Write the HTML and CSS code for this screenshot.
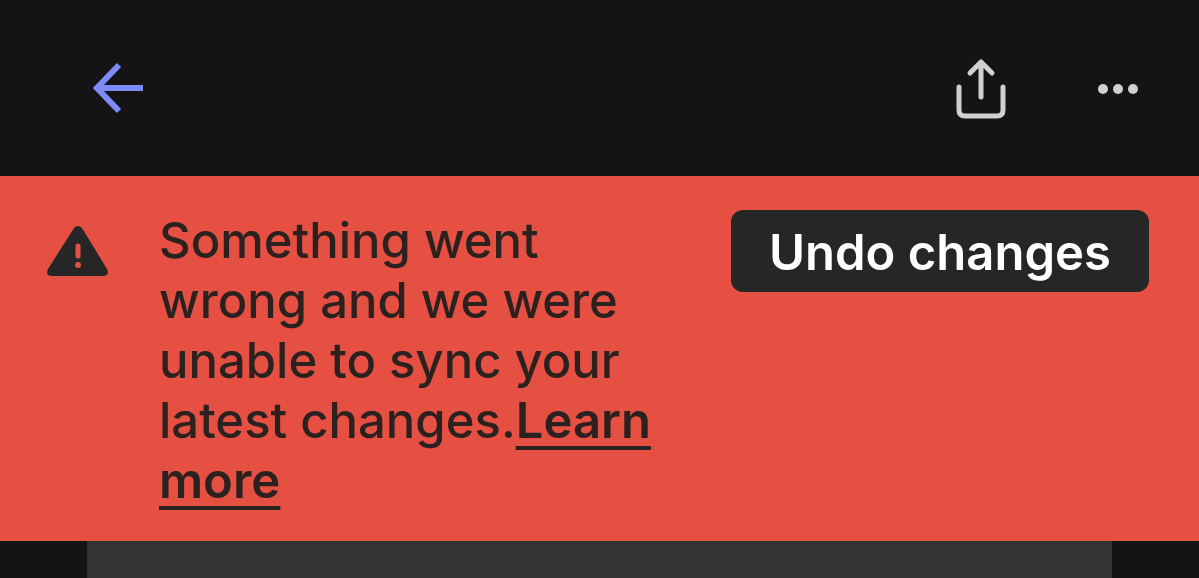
FILE: index.html
```html
<!DOCTYPE html>
<html lang="en">
<head>
<meta charset="utf-8">
<meta name="viewport" content="width=device-width, initial-scale=1">
<title>Sync error</title>
<link rel="stylesheet" href="styles.css">
</head>
<body>
<header class="topbar">
  <button class="icon-button" type="button" aria-label="Back">
    <svg class="back-icon" width="52" height="52" viewBox="0 0 52 52"><path d="M51 26H6M27 3L5 26L27 49"/></svg>
  </button>
  <div class="actions">
    <button class="icon-button" type="button" aria-label="Share">
      <svg class="share-icon" width="50" height="62" viewBox="0 0 50 62"><path d="M26 40V5M15 16L26 5L37 16M4 30V53Q4 59 10 59H42Q48 59 48 53V30"/></svg>
    </button>
    <button class="icon-button" type="button" aria-label="More">
      <svg class="more-icon" width="42" height="12" viewBox="0 0 42 12"><circle cx="6" cy="7" r="5"/><circle cx="21" cy="7" r="5"/><circle cx="36" cy="7" r="5"/></svg>
    </button>
  </div>
</header>
<section class="banner" role="alert">
  <svg class="warning-icon" width="62" height="52" viewBox="0 0 62 52"><path class="triangle" d="M27 2Q31-2 35 2L60 43Q63 50 56 50H5Q-2 50 1 43Z"/><path class="mark" d="M31 20V30"/><circle class="dot" cx="31" cy="39" r="3"/></svg>
  <p class="message">Something went wrong and we were unable to sync your latest changes.<a class="learn" href="#">Learn more</a></p>
  <button class="undo" type="button">Undo changes</button>
</section>
<main class="content"><div class="cover"></div></main>
</body>
</html>
```
FILE: styles.css
```css
* { box-sizing: border-box; }
body {
  display: flex;
  flex-direction: column;
  min-height: 100vh;
  margin: 0;
  background: #141414;
  font-family: Inter, "Liberation Sans", sans-serif;
  font-optical-sizing: none;
}
.topbar {
  display: flex;
  align-items: center;
  justify-content: space-between;
  height: 176px;
  padding: 0 60px 0 92px;
}
.actions { display: flex; align-items: center; gap: 92px; }
.icon-button { display: flex; padding: 0; border: 0; background: none; }
.icon-button svg { overflow: visible; fill: none; stroke-width: 5; }
.icon-button .back-icon { stroke: #7d8cfa; stroke-width: 6; }
.icon-button .share-icon { stroke: #d2d0cf; stroke-linecap: round; stroke-linejoin: round; }
.icon-button .more-icon { fill: #d2d0cf; }
.banner {
  display: flex;
  align-items: flex-start;
  padding: 34px 50px 30px 47px;
  background: #e55043;
}
.warning-icon { flex: none; margin: 16px 50px 0 0; }
.triangle { fill: #262626; }
.mark { stroke: #e55043; stroke-width: 5; stroke-linecap: round; }
.dot { fill: #e55043; }
.message {
  flex: 1;
  margin: 0 72px 0 0;
  padding-top: 1px;
  color: #2b2220;
  font-size: 49px;
  font-weight: 500;
  line-height: 60px;
}
.learn {
  color: inherit;
  font-weight: 600;
  text-decoration-line: underline;
  text-decoration-thickness: 4px;
  text-underline-offset: 8px;
  text-decoration-skip-ink: none;
}
.undo {
  flex: none;
  height: 82px;
  padding: 4px 38px 0;
  border: 0;
  border-radius: 12px;
  background: #262626;
  color: #fff;
  font-family: inherit;
  font-size: 49px;
  font-weight: 600;
  line-height: 60px;
}
.content { display: flex; flex: 1; padding: 0 87px; }
.cover { flex: 1; background: #333; }
```
